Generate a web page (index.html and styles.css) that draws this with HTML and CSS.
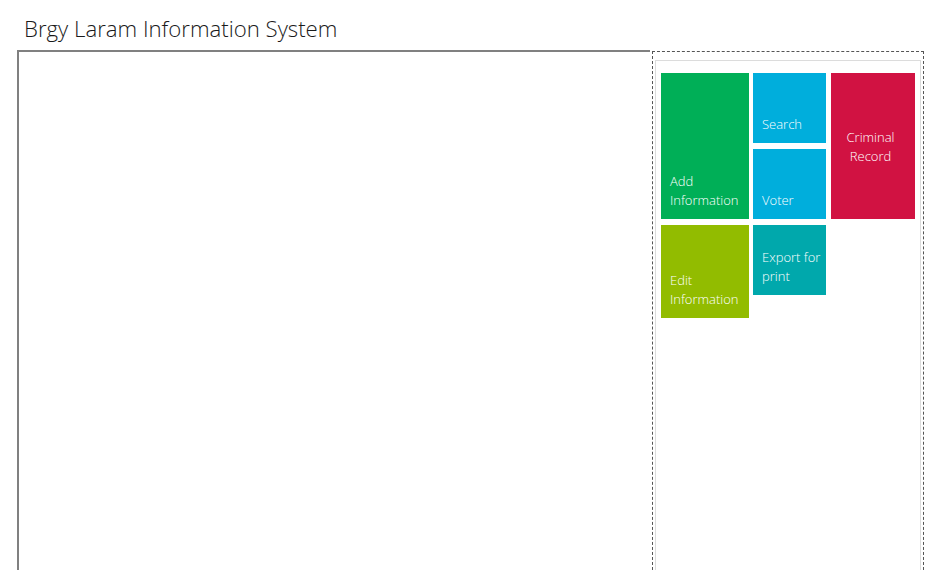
FILE: index.html
```html
<!DOCTYPE html>
<html>
<head>
<meta charset="utf-8">
<title>Brgy Laram Information System</title>
<link rel="stylesheet" href="styles.css">
</head>
<body>
<h1 class="title">Brgy Laram Information System</h1>
<div class="main">
  <div class="content"></div>
  <div class="side">
    <div class="tiles">
      <div class="col">
        <div class="tile green tall">Add<br>Information</div>
        <div class="tile olive mid">Edit<br>Information</div>
      </div>
      <div class="col">
        <div class="tile blue small">Search</div>
        <div class="tile blue small">Voter</div>
        <div class="tile teal small">Export for<br>print</div>
      </div>
      <div class="col">
        <div class="tile red tall center">Criminal<br>Record</div>
      </div>
    </div>
  </div>
</div>
</body>
</html>
```
FILE: styles.css
```css
html, body {
  margin: 0;
  padding: 0;
  background: #fff;
  font-family: "Open Sans", "Noto Sans", sans-serif;
}
body {
  overflow: hidden;
  height: 570px;
}
.title {
  margin: 0;
  padding: 14px 0 0 24px;
  height: 51px;
  box-sizing: border-box;
  font-size: 22.2px;
  font-weight: 300;
  line-height: 30px;
  color: #1a1a1a;
}
.main {
  display: flex;
  padding-left: 17px;
  height: 519px;
}
.content {
  width: 633px;
  box-sizing: border-box;
  border-top: 2px solid #808080;
  border-left: 2px solid #808080;
  margin-top: -1px;
}
.side {
  margin-left: 2px;
  width: 272px;
  box-sizing: border-box;
  border: 1px dashed #555;
  border-bottom: none;
  padding: 8px 2px 0 2px;
}
.tiles {
  border: 1px solid #dcdcdc;
  border-bottom: none;
  height: 100%;
  box-sizing: border-box;
  padding: 12px 5px 0 5px;
  display: flex;
  align-items: flex-start;
}
.col {
  display: flex;
  flex-direction: column;
  gap: 6px;
  margin-right: 4px;
}
.col:last-child {
  margin-left: 1px;
  margin-right: 0;
}
.tile {
  box-sizing: border-box;
  color: #fff;
  font-size: 13px;
  font-weight: 300;
  line-height: 19px;
  padding: 0 0 9px 9px;
  display: flex;
  align-items: flex-end;
  white-space: nowrap;
}
.tile.center {
  align-items: center;
  justify-content: center;
  text-align: center;
  padding: 2px 5px 0 0;
}
.green { background: #00af57; width: 88px; }
.olive { background: #92bc00; width: 88px; }
.blue { background: #00aedc; width: 73px; }
.teal { background: #00a8ac; width: 73px; }
.red { background: #d11242; width: 84px; }
.tall { height: 146px; }
.mid { height: 93px; }
.small { height: 70px; }
```
